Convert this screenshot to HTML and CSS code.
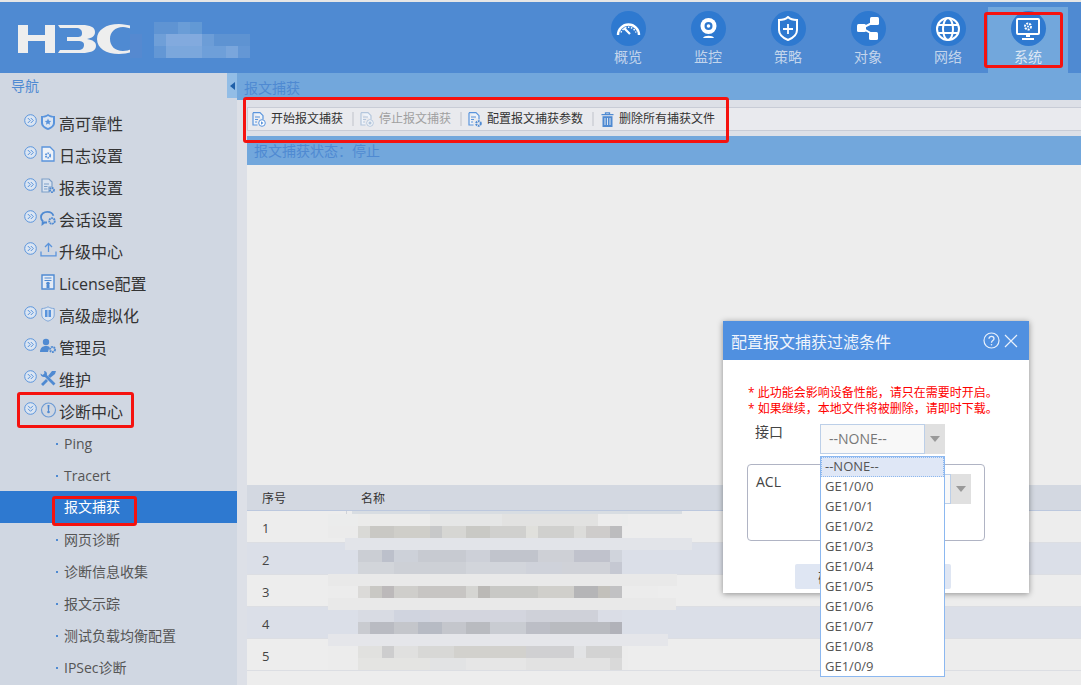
FILE: index.html
```html
<!DOCTYPE html>
<html lang="zh-CN">
<head>
<meta charset="utf-8">
<title>报文捕获</title>
<link rel="stylesheet" href="styles.css">
</head>
<body>
<div class="page">
  <header class="header">
    <div class="brand">
      <svg class="logo" width="114" height="30" viewBox="0 0 114 30"><g fill="#eeeeee"><path d="M0 1h10v10h17V1h10v28H27V17H10v12H0z"/><path d="M40 1h24c8 0 13 2 13 7 0 4-3 6-8 7 6 1 9 3 9 7 0 5-6 7-14 7H40l2-3h18c4 0 6-2 6-5 0-3-2-4-6-4H49v-4h10c4 0 5-1 5-4s-2-5-6-5H42z"/><path d="M114 2c-4-1-9-2-13-2-13 0-22 6-22 15s9 15 22 15c4 0 9-1 13-2v-3c-3 1-6 2-9 2-8 0-13-5-13-12s5-12 13-12c3 0 6 1 9 2z"/></g></svg>
      <div class="logo-mosaic">
        <div class="lm lm1"></div>
        <div class="lm lm2"></div>
        <div class="lm lm3"></div>
      </div>
    </div>
    <nav class="topnav">
      <a class="topitem"><span class="disc"><svg width="25" height="25" viewBox="0 0 25 25" fill="none" stroke="#fff"><path d="M2 19a10.5 10.5 0 1 1 21 0" stroke-width="2.4"/><path d="M5 16.500a8 8 0 0 1 15 0" stroke-width="1.500" stroke-dasharray="1.500 1.500"/><path d="M8 12l6 6" stroke-width="2.200"/></svg></span><span>概览</span></a>
      <a class="topitem"><span class="disc"><svg width="25" height="27" viewBox="0 0 25 27" fill="none"><circle cx="12.500" cy="11" r="8" fill="#fff"/><circle cx="12.500" cy="11" r="4" fill="#2e79d0"/><circle cx="12.500" cy="11" r="1.800" fill="#fff"/><path d="M7 23c1-3 10-3 11 0z" fill="#fff"/></svg></span><span>监控</span></a>
      <a class="topitem"><span class="disc"><svg width="22" height="26" viewBox="0 0 22 26" fill="none" stroke="#fff"><path d="M2 4c4 0 7-1 9-3 2 2 5 3 9 3v10c0 5-4 8-9 10-5-2-9-5-9-10z" stroke-width="2"/><path d="M11 8v10M6 13h10" stroke-width="1.800"/></svg></span><span>策略</span></a>
      <a class="topitem"><span class="disc"><svg width="24" height="25" viewBox="0 0 24 25"><path d="M18 6 6 12l12 7" fill="none" stroke="#fff" stroke-width="2"/><rect x="14" y="1" width="9" height="8" rx="1.500" fill="#fff"/><rect x="1" y="8" width="9" height="8" rx="1.500" fill="#fff"/><rect x="13" y="16" width="9" height="8" rx="1.500" fill="#fff"/></svg></span><span>对象</span></a>
      <a class="topitem"><span class="disc"><svg width="26" height="26" viewBox="0 0 26 26" fill="none" stroke="#fff" stroke-width="2"><circle cx="13" cy="13" r="11"/><ellipse cx="13" cy="13" rx="5" ry="11"/><path d="M3 9h20M3 17h20"/></svg></span><span>网络</span></a>
      <a class="topitem active"><span class="disc"><svg width="26" height="24" viewBox="0 0 26 24" fill="none"><rect x="2" y="2" width="22" height="15" rx="1" stroke="#fff" stroke-width="2"/><circle cx="13" cy="9.500" r="3" stroke="#fff" stroke-width="2" stroke-dasharray="2 1"/><circle cx="13" cy="9.500" r="1" fill="#fff"/><path d="M11 19h4M7 22h12" stroke="#fff" stroke-width="2"/></svg></span><span>系统</span></a>
    </nav>
  </header>

  <div class="workspace">
    <aside class="sidebar">
      <div class="side-head"><span>导航</span><button class="collapse" type="button"><i class="tri-left"></i></button></div>
      <ul class="menu">
        <li class="mi"><svg class="chev" viewBox="0 0 13 13"><circle cx="6.500" cy="6.500" r="5.800"/><path d="M3.800 4l2.500 2.500L3.800 9M6.800 4l2.500 2.500L6.800 9"/></svg><svg class="ic" viewBox="0 0 14 16"><path d="M7 0c2 1.500 4 2 7 2v7c0 3-3 5.500-7 7-4-1.500-7-4-7-7V2c3 0 5-.5 7-2z" fill="#5a94dc"/><path d="M7 2c2 1 3 1.500 5 1.500V9c0 2-2 4-5 5-3-1-5-3-5-5V3.500C4 3.500 5 3 7 2z" fill="#dbe5f2"/><path d="m7 4.500 1 2.200 2.300.2-1.800 1.500.6 2.300L7 9.500l-2.100 1.200.6-2.300-1.800-1.500L6 6.700z" fill="#5a94dc"/></svg><span>高可靠性</span></li>
        <li class="mi"><svg class="chev" viewBox="0 0 13 13"><circle cx="6.500" cy="6.500" r="5.800"/><path d="M3.800 4l2.500 2.500L3.800 9M6.800 4l2.500 2.500L6.800 9"/></svg><svg class="ic" viewBox="0 0 14 16"><path d="M1 1h8l4 4v10H1z" fill="#eef2f8" stroke="#5a94dc" stroke-width="1.300"/><circle cx="7" cy="9.500" r="2.200" fill="none" stroke="#5a94dc" stroke-width="1.800" stroke-dasharray="1.500 .7"/></svg><span>日志设置</span></li>
        <li class="mi"><svg class="chev" viewBox="0 0 13 13"><circle cx="6.500" cy="6.500" r="5.800"/><path d="M3.800 4l2.500 2.500L3.800 9M6.800 4l2.500 2.500L6.800 9"/></svg><svg class="ic" viewBox="0 0 14 16"><path d="M1 1h7l3 3v5H8v5H1z" fill="#d9e3f0" stroke="#7c9fc8" stroke-width="1.200"/><path d="M3 6h5M3 8.500h3.500M3 11h3.500" stroke="#7c9fc8"/><circle cx="11" cy="12" r="2" fill="none" stroke="#4f8ad2" stroke-width="1.800" stroke-dasharray="1.500 .6"/></svg><span>报表设置</span></li>
        <li class="mi"><svg class="chev" viewBox="0 0 13 13"><circle cx="6.500" cy="6.500" r="5.800"/><path d="M3.800 4l2.500 2.500L3.800 9M6.800 4l2.500 2.500L6.800 9"/></svg><svg class="ic wide" viewBox="0 0 17 16"><path d="M7 12.500c-.8 0-1.500 0-2.200-.2L2.500 14l.2-3C1.600 10 1 8.700 1 7.200 1 4 3.900 1.800 7.300 1.800c3 0 5.500 1.600 6.100 4" fill="none" stroke="#4f8ad2" stroke-width="1.800"/><circle cx="12" cy="11" r="2.800" fill="none" stroke="#4f8ad2" stroke-width="1.800" stroke-dasharray="1.800 .6"/></svg><span>会话设置</span></li>
        <li class="mi"><svg class="chev" viewBox="0 0 13 13"><circle cx="6.500" cy="6.500" r="5.800"/><path d="M3.800 4l2.500 2.500L3.800 9M6.800 4l2.500 2.500L6.800 9"/></svg><svg class="ic wide" viewBox="0 0 17 16"><path d="M1 9.500v4.300h15V9.500M8.500 10V1.500M5 5l3.500-3.500L12 5" fill="none" stroke="#5a94dc" stroke-width="1.300"/></svg><span>升级中心</span></li>
        <li class="mi"><span class="chev-slot"></span><svg class="ic" viewBox="0 0 14 16"><path d="M1 1h12v14H1z" fill="#e4ebf5" stroke="#4f8ad2" stroke-width="1.400"/><path d="M3.500 4h7M3.500 6.500h7" stroke="#4f8ad2"/><circle cx="7" cy="9.500" r="1.800" fill="#4f8ad2"/><path d="M5.500 11v3h3v-3" fill="#4f8ad2"/></svg><span>License配置</span></li>
        <li class="mi"><svg class="chev" viewBox="0 0 13 13"><circle cx="6.500" cy="6.500" r="5.800"/><path d="M3.800 4l2.500 2.500L3.800 9M6.800 4l2.500 2.500L6.800 9"/></svg><svg class="ic" viewBox="0 0 14 16"><path d="M7 .8c2 1.200 4 1.700 6.200 1.700V9c0 3-2.700 5-6.200 6.200C3.500 14 .8 12 .8 9V2.500C3 2.500 5 2 7 .8z" fill="#dbe5f2" stroke="#7fa6d8"/><path d="M4 4h2.500v7H4zM7.500 4H10v7H7.500z" fill="#5a94dc"/></svg><span>高级虚拟化</span></li>
        <li class="mi"><svg class="chev" viewBox="0 0 13 13"><circle cx="6.500" cy="6.500" r="5.800"/><path d="M3.800 4l2.500 2.500L3.800 9M6.800 4l2.500 2.500L6.800 9"/></svg><svg class="ic wide" viewBox="0 0 17 16"><circle cx="6" cy="4" r="3.200" fill="#4f8ad2"/><path d="M0 14c0-4 2.500-6 6-6 1.500 0 2.500.3 3.500 1L8 14z" fill="#4f8ad2"/><circle cx="12.500" cy="11.500" r="2.500" fill="none" stroke="#4f8ad2" stroke-width="2" stroke-dasharray="1.800 .7"/></svg><span>管理员</span></li>
        <li class="mi"><svg class="chev" viewBox="0 0 13 13"><circle cx="6.500" cy="6.500" r="5.800"/><path d="M3.800 4l2.500 2.500L3.800 9M6.800 4l2.500 2.500L6.800 9"/></svg><svg class="ic wide" viewBox="0 0 17 16"><path d="M4 1c1.500 0 3 1.200 3 3 0 .4 0 .7-.2 1L15.500 13.500l-2 2L5 7c-.3.100-.6.100-1 .1-2 0-3.500-1.500-3.500-3.500l2.200 1.500L4.500 3.300z" fill="#4f8ad2"/><path d="M12 1l4 0-1 3-5 4-2-2zM1 14l5-5 2 2-5 5z" fill="#4f8ad2"/></svg><span>维护</span></li>
        <li class="mi"><svg class="chev" viewBox="0 0 13 13"><circle cx="6.500" cy="6.500" r="5.800"/><path d="M4 3.800l2.500 2.500L9 3.800M4 6.800l2.500 2.500L9 6.800"/></svg><svg class="ic wide" viewBox="0 0 17 16"><circle cx="8.500" cy="8" r="7" fill="none" stroke="#6d9bd4" stroke-width="1.200"/><path d="M7.500 3h2l-.5 6H8z" fill="#4f8ad2"/><circle cx="8.500" cy="10" r="1.300" fill="#4f8ad2"/></svg><span>诊断中心</span></li>
        <li class="sub">Ping</li>
        <li class="sub">Tracert</li>
        <li class="sub current">报文捕获</li>
        <li class="sub">网页诊断</li>
        <li class="sub">诊断信息收集</li>
        <li class="sub">报文示踪</li>
        <li class="sub">测试负载均衡配置</li>
        <li class="sub">IPSec诊断</li>
      </ul>
    </aside>

    <main class="main">
      <div class="title">报文捕获</div>
      <div class="body">
        <div class="toolbar">
          <button class="tool" type="button"><svg class="tic" viewBox="0 0 14 15"><path d="M1 .7h7l3 3V7.500M5.500 13H1V.7" fill="#eef3fa" stroke="#5a94dc" stroke-width="1.200"/><path d="M3 5h5M3 7.500h3M3 10h2" stroke="#5a94dc"/><circle cx="10" cy="11" r="3.300" fill="#fff" stroke="#5a94dc"/><path d="m9 9.300 2.500 1.700L9 12.700z" fill="#5a94dc"/></svg>开始报文捕获</button>
          <i class="sep"></i>
          <button class="tool off" type="button"><svg class="tic" viewBox="0 0 14 15"><path d="M1 .7h7l3 3V7.500M5.500 13H1V.7" fill="#eef3fa" stroke="#b4c6dc" stroke-width="1.200"/><path d="M3 5h5M3 7.500h3M3 10h2" stroke="#b4c6dc"/><circle cx="10" cy="11" r="3.300" fill="#fff" stroke="#b4c6dc"/><rect x="8.500" y="9.500" width="3" height="3" fill="#b4c6dc"/></svg>停止报文捕获</button>
          <i class="sep"></i>
          <button class="tool" type="button"><svg class="tic" viewBox="0 0 14 15"><path d="M1 .7h7l3 3V7.500M5.500 13H1V.7" fill="#eef3fa" stroke="#5a94dc" stroke-width="1.200"/><path d="M3 5h5M3 7.500h3M3 10h2" stroke="#5a94dc"/><circle cx="10.500" cy="11.500" r="2.300" fill="none" stroke="#4f8ad2" stroke-width="2" stroke-dasharray="1.600 .7"/></svg>配置报文捕获参数</button>
          <i class="sep"></i>
          <button class="tool" type="button"><svg class="tic trash" viewBox="0 0 13 15"><path d="M4.500 2V.8h4V2M.5 2.700h12" fill="none" stroke="#4f8ad2" stroke-width="1.300"/><path d="M1.500 4.200h10V15h-10z" fill="#4f8ad2"/><path d="M4 6v7M6.500 6v7M9 6v7" stroke="#dbe5f2"/></svg>删除所有捕获文件</button>
        </div>
        <div class="status">报文捕获状态：停止</div>
        <div class="canvas"></div>
        <div class="table">
          <div class="row head"><span class="c1">序号</span><span class="c2">名称</span></div>
          <div class="row"><span class="c1">1</span><span class="c2 ruled"></span></div>
          <div class="row alt"><span class="c1">2</span><span class="c2 ruled"></span></div>
          <div class="row"><span class="c1">3</span><span class="c2 ruled"></span></div>
          <div class="row alt"><span class="c1">4</span><span class="c2 ruled"></span></div>
          <div class="row"><span class="c1">5</span><span class="c2 ruled"></span></div>
        </div>
      </div>
    </main>
  </div>

  <div class="mosaic">
    <div class="mr m0"></div><div class="mr m1"></div><div class="mr m2"></div><div class="mr m3"></div><div class="mr m4"></div><div class="mr m5"></div><div class="mr m6"></div><div class="mr m7"></div><div class="mr m8"></div><div class="mr m9"></div><div class="mr m10"></div><div class="mr m11"></div><div class="mr m12"></div><div class="mr m13"></div>
  </div>

  <section class="dialog">
    <div class="dlg-head">
      <span>配置报文捕获过滤条件</span>
      <span class="dlg-tools">
        <svg width="17" height="17" viewBox="0 0 17 17" fill="none" stroke="#e8f0fb"><circle cx="8.500" cy="8.500" r="7.500" stroke-width="1.200"/><path d="M6 6.700c0-3.200 5-3.200 5 0 0 2-2.500 1.800-2.500 4" stroke-width="1.300"/><circle cx="8.500" cy="12.700" r=".8" fill="#e8f0fb" stroke="none"/></svg>
        <svg width="14" height="14" viewBox="0 0 14 14" fill="none" stroke="#e8f0fb" stroke-width="1.200"><path d="m1 1 12 12M13 1 1 13"/></svg>
      </span>
    </div>
    <div class="dlg-body">
      <p class="warn">* 此功能会影响设备性能，请只在需要时开启。</p>
      <p class="warn">* 如果继续，本地文件将被删除，请即时下载。</p>
      <div class="field">
        <label>接口</label>
        <div class="select"><span class="val">--NONE--</span><span class="arrow"><i class="tri-down"></i></span></div>
      </div>
      <fieldset class="acl">
        <span class="acl-label">ACL</span>
        <div class="select small"><span class="val"></span><span class="arrow"><i class="tri-down"></i></span></div>
      </fieldset>
      <div class="actions"><button class="btn" type="button">确定</button><button class="btn alt-btn" type="button">取消</button></div>
    </div>
  </section>

  <ul class="dropdown">
    <li class="sel">--NONE--</li>
    <li>GE1/0/0</li><li>GE1/0/1</li><li>GE1/0/2</li><li>GE1/0/3</li><li>GE1/0/4</li><li>GE1/0/5</li><li>GE1/0/6</li><li>GE1/0/7</li><li>GE1/0/8</li><li>GE1/0/9</li>
  </ul>

  <i class="mark mark-sys"></i>
  <i class="mark mark-tool"></i>
  <i class="mark mark-diag"></i>
  <i class="mark mark-cap"></i>
</div>
</body>
</html>
```
FILE: styles.css
```css
* { box-sizing: border-box; }
html, body { margin: 0; padding: 0; }
body { font-family: "Open Sans", "Noto Sans CJK SC", sans-serif; color: #333; }
.page { position: relative; width: 1081px; height: 685px; overflow: hidden; background: #ededed; border-top: 2px solid #e6e6e6; display: flex; flex-direction: column; }
ul { list-style: none; margin: 0; padding: 0; }
button { font: inherit; border: 0; background: none; padding: 0; color: inherit; }

/* header */
.header { height: 71px; flex: none; background: #4f8ad2; display: flex; justify-content: space-between; padding-right: 13px; }
.brand { position: relative; width: 300px; padding: 22px 0 0 18px; }
.logo { display: block; }
.logo-mosaic { position: absolute; left: 130px; top: 20px; }
.lm { width: 120px; height: 12px; }
.lm1 { background: linear-gradient(90deg, #4f8ad2 0 24px, #5f94d3 24px 48px, #6a9dd7 48px 60px, #6299d5 60px 72px, #4f8ad2 72px); }
.lm2 { background: linear-gradient(90deg, #5589d0 0 12px, #4f8ad2 12px 24px, #6f9fd8 24px 36px, #82aade 36px 72px, #6c9dd7 72px 84px, #5e93d2 84px 120px); }
.lm3 { background: linear-gradient(90deg, #5589d0 0 12px, #4f8ad2 12px 24px, #6397d5 24px 36px, #7ba7dc 36px 72px, #6e9fd9 72px 96px, #7aa6dc 96px 108px, #6497d5 108px 120px); }
.topnav { display: flex; padding-top: 5px; }
.topitem { width: 80px; display: flex; flex-direction: column; align-items: center; gap: 1px; font-size: 14px; line-height: 20px; color: #c3d5ec; padding-top: 4px; }
.topitem.active { background: #72a7dc; color: #dbe6f4; }
.disc { width: 35px; height: 35px; border-radius: 50%; background: #2e79d0; display: flex; align-items: center; justify-content: center; flex: none; }

/* layout */
.workspace { flex: 1; display: flex; min-height: 0; }
.sidebar { width: 237px; flex: none; background: #d0d7e2; }
.side-head { height: 35px; display: flex; justify-content: space-between; align-items: flex-start; padding-left: 11px; font-size: 14px; line-height: 25px; color: #4f8ad2; }
.collapse { width: 10px; height: 25px; background: #92bde6; display: flex; align-items: center; justify-content: center; }
.tri-left { border: 4px solid transparent; border-right: 5px solid #1f5fa8; border-left: 0; }
.mi { height: 32px; display: flex; align-items: center; padding-left: 24px; font-size: 16px; color: #333; }
.mi span { margin-top: -2px; }
.chev { width: 13px; height: 13px; margin-top: -7px; fill: #dbe5f2; stroke: #5a94dc; stroke-width: 1; flex: none; }
.chev path { fill: none; }
.chev-slot { width: 13px; flex: none; }
.ic { width: 14px; height: 16px; margin: -4px 4px 0 4px; flex: none; }
.ic.wide { width: 17px; margin: -4px 2px 0 3px; }
.sub { height: 32px; line-height: 32px; padding-left: 64px; font-size: 14px; color: #555; position: relative; }
.sub::before { content: ""; position: absolute; left: 56px; top: 15px; width: 2px; height: 2px; background: #4f8ad2; }
.sub.current { background: #2e79d0; color: #fff; margin-top: -1px; margin-bottom: 1px; }
.sub.current::before { display: none; }

/* main */
.main { flex: 1; min-width: 0; display: flex; flex-direction: column; background: #dde0e7; }
.title { height: 27px; flex: none; background: #72a7dc; padding-left: 7px; font-size: 14px; line-height: 30px; color: #4f8ad2; }
.body { flex: 1; padding: 7px 0 0 10px; display: flex; flex-direction: column; }
.toolbar { height: 24px; flex: none; background: #e9eaee; border: 1px solid #c8ccd6; border-right: 0; display: flex; align-items: center; padding-left: 4px; font-size: 12px; color: #333; }
.tool { display: flex; align-items: center; gap: 5px; white-space: nowrap; line-height: 20px; }
.tool.off { color: #a0a0a0; }
.tic { width: 14px; height: 15px; flex: none; }
.trash { width: 13px; }
.sep { width: 2px; height: 14px; background: #d4d6dc; margin: 0 6px 0 9px; }
.sep:nth-of-type(3) { margin-right: 7px; }
.status { height: 29px; margin-top: 5px; flex: none; background: #72a7dc; padding-left: 7px; font-size: 14px; line-height: 30px; color: #4f8ad2; }
.canvas { height: 320px; flex: none; background: #ededed; }
.table { flex: 1; background: #ededed; font-size: 12px; }
.row { height: 32px; display: flex; align-items: center; border-bottom: 1px solid #dcdee3; color: #444; }
.row.head { height: 26px; background: #d3d8e1; border-bottom: 1px solid #bcc8de; color: #333; }
.row.alt { background: #dbdfe8; }
.c1 { width: 99px; padding: 2px 0 0 15px; font-size: 13px; flex: none; }
.head .c1 { font-size: 12px; padding-top: 0; }
.c2 { flex: 1; padding-left: 15px; align-self: stretch; display: flex; align-items: center; }
.ruled { border-left: 1px solid #d0d3d9; }

/* mosaic over the blurred table cells */
.mosaic { position: absolute; left: 328px; top: 509px; width: 370px; }
.mr { height: 12px; background-repeat: no-repeat; background-size: 264px 100%; background-position: 30px 0; }
.m0 { height: 3px; margin-left: 24px; width: 330px; background: #d8dde2; }
.m1 { width: 300px; background-image: linear-gradient(90deg, #ebebea 0 72px, #e5e6e6 72px 144px, #e2e2e1 144px 240px, #ececec 240px); background-color: #ebecec; }
.m2 { width: 295px; background-image: linear-gradient(90deg, #d9d9d6 0 12px, #c9c8c4 12px 36px, #cfcec9 36px 72px, #c7c8c9 72px 84px, #d6d6d3 84px 108px, #c9c9c5 108px 132px, #d0d0ce 132px 168px, #e0e0dc 168px 180px, #d0d0ce 180px 216px, #dcdcda 216px 228px, #cecccb 228px 252px, #bcbcbe 252px); background-color: #ebebeb; }
.m3 { height: 12px; width: 347px; margin-left: 17px; background: #e2e4e9; }
.m4 { width: 295px; background-image: linear-gradient(90deg, #cbced4 0 24px, #bcc0cb 24px 36px, #cdd1d9 36px 60px, #c7cad1 60px 108px, #cdd0d8 108px 132px, #c1c4cc 132px 180px, #ced0d6 180px 216px, #c0c2cc 216px 252px, #d0d4dc 252px); background-color: #dbdfe8; }
.m5 { width: 295px; background-image: linear-gradient(90deg, #d2d5da 0 36px, #cdd0d6 36px 108px, #d2d5db 108px 168px, #cfd2da 168px 204px, #d0d2d8 204px 252px, #c5c8d2 252px); background-color: #dbdfe8; }
.m6 { width: 349px; background: #e9e9e9; }
.m7 { width: 330px; background-image: linear-gradient(90deg, #dbdad8 0 12px, #c9c8c4 12px 24px, #bcb9ba 24px 36px, #cfcecb 36px 60px, #c7c5c3 60px 108px, #d5d5d2 108px 120px, #bbb9b6 120px 132px, #c8c8c5 132px 180px, #d0cfcb 180px 216px, #b5b5b7 216px 240px, #c2c0bb 240px 252px, #c1c1c3 252px); background-color: #ececec; }
.m8 { width: 348px; background: #e9e9e9; }
.m9 { width: 330px; background-image: linear-gradient(90deg, #d8dbe3 0 36px, #d0d4df 36px 72px, #d3d5de 72px 168px, #cfd1d9 168px 240px, #dadde6 240px); background-color: #dbdfe8; }
.m10 { width: 330px; background-image: linear-gradient(90deg, #c9cbd0 0 12px, #b9bbc2 12px 36px, #c4c6cb 36px 60px, #b7bbc4 60px 84px, #c4c6cc 84px 108px, #b9bbc0 108px 132px, #c9ccd2 132px 168px, #bcbec6 168px 192px, #b9bbc0 192px 252px, #b1b2b9 252px); background-color: #dbdfe8; }
.m11 { width: 340px; background: #e5e6ea; }
.m12 { width: 300px; background-image: linear-gradient(90deg, #e1e1df 0 24px, #cdcdce 24px 36px, #e0e0df 36px 60px, #d8d8d6 60px 96px, #d2d1cd 96px 168px, #d0d0d2 168px 216px, #e2e3e5 216px 228px, #d3d3d3 228px); background-color: #ececec; }
.m13 { width: 300px; background-image: linear-gradient(90deg, #e4e4e2 0 72px, #e2e3e4 72px 108px, #e6e6e6 108px 168px, #e2e2e2 168px 252px, #d9d9d9 252px); background-color: #ececec; }

/* dialog */
.dialog { position: absolute; left: 723px; top: 319px; width: 306px; height: 272px; background: #fff; box-shadow: 0 1px 6px rgba(0,0,0,.4); }
.dlg-head { height: 39px; background: #5090e0; padding: 0 11px 0 8px; display: flex; justify-content: space-between; align-items: center; font-size: 16px; color: #f0f5fc; }
.dlg-tools { display: flex; align-items: center; gap: 4px; }
.dlg-body { padding: 25px 0 0 25px; }
.warn { margin: 0; font-size: 12px; line-height: 16px; color: #f00; white-space: nowrap; }
.field { display: flex; align-items: flex-start; margin-top: 7px; height: 40px; }
.field label { width: 72px; padding-left: 7px; font-size: 14px; line-height: 16px; color: #444; }
.select { display: flex; width: 125px; height: 30px; }
.val { width: 105px; background: #f8f8f8; border: 1px solid #bccfe8; font-size: 14px; line-height: 28px; padding-left: 8px; color: #777; }
.arrow { width: 20px; background: #e0e0e0; display: flex; align-items: center; justify-content: center; }
.tri-down { border: 5px solid transparent; border-top: 6px solid #999; border-bottom: 0; }
.acl { margin: 0 0 0 -1px; padding: 0; width: 238px; height: 77px; border: 1px solid #b0b4c4; border-radius: 4px; display: flex; justify-content: space-between; position: relative; }
.acl-label { font-size: 14px; line-height: 34px; padding-left: 8px; color: #444; }
.select.small { margin: 9px 13px 0 0; width: 150px; }
.select.small .val { width: 130px; }
.actions { display: flex; gap: 10px; margin: 23px 0 0 47px; }
.btn { width: 74px; height: 25px; background: #dfe6f3; border-radius: 2px; font-size: 14px; color: #444; }
.alt-btn { width: 72px; }

.dropdown { position: absolute; left: 820px; top: 454px; width: 125px; height: 221px; background: #fff; border: 1px solid #8cb8f0; font-size: 13px; color: #555; }
.dropdown li { height: 20px; line-height: 18px; padding-left: 4px; }
.dropdown .sel { background: #dfe7f6; outline: 1px dotted #8cb8f0; outline-offset: -1px; }

/* red annotation boxes */
.mark { position: absolute; border: 3px solid #f5120f; border-radius: 3px; }
.mark-sys { left: 984px; top: 10px; width: 79px; height: 56px; }
.mark-tool { left: 243px; top: 95px; width: 486px; height: 46px; }
.mark-diag { left: 17px; top: 390px; width: 117px; height: 36px; }
.mark-cap { left: 52px; top: 494px; width: 85px; height: 30px; }
```
